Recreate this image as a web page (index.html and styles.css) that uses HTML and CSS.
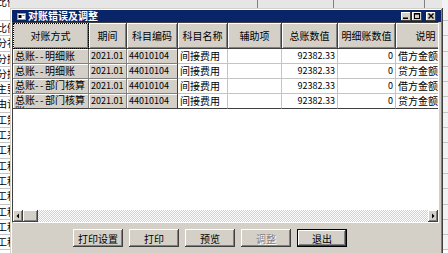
FILE: index.html
```html
<!DOCTYPE html>
<html lang="zh-CN">
<head>
  <meta charset="UTF-8">
  <meta name="viewport" content="width=device-width, initial-scale=1.0">
  <title>对账错误及调整</title>
  <link rel="stylesheet" href="styles.css">
</head>
<body>
<!-- background application sheet -->
<div class="sheet">
  <div class="srow top">
    <span class="sl">比例</span>
    <span class="sm"><i class="seg s1"></i><i class="seg s2"></i><i class="seg s3"></i></span>
    <span class="sr"></span>
  </div>
  <div class="srow gap"><span class="sl"></span><span class="sm"></span><span class="sr"></span></div>
  <div class="srow"><span class="sl">比例</span><span class="sm"></span><span class="sr"></span></div>
  <div class="srow"><span class="sl">分补</span><span class="sm"></span><span class="sr"></span></div>
  <div class="srow"><span class="sl">分摊</span><span class="sm"></span><span class="sr"></span></div>
  <div class="srow"><span class="sl">分摊</span><span class="sm"></span><span class="sr"></span></div>
  <div class="srow"><span class="sl">主要</span><span class="sm"></span><span class="sr"></span></div>
  <div class="srow"><span class="sl">由计</span><span class="sm"></span><span class="sr"></span></div>
  <div class="srow"><span class="sl">工策</span><span class="sm"></span><span class="sr"></span></div>
  <div class="srow"><span class="sl">工采</span><span class="sm"></span><span class="sr"></span></div>
  <div class="srow"><span class="sl">工程</span><span class="sm"></span><span class="sr"></span></div>
  <div class="srow"><span class="sl">工程</span><span class="sm"></span><span class="sr"></span></div>
  <div class="srow"><span class="sl">工程</span><span class="sm"></span><span class="sr"></span></div>
  <div class="srow"><span class="sl">工程</span><span class="sm"></span><span class="sr"></span></div>
  <div class="srow"><span class="sl">工程</span><span class="sm"></span><span class="sr"></span></div>
  <div class="srow"><span class="sl">工程</span><span class="sm"></span><span class="sr"></span></div>
  <div class="srow"><span class="sl">工程</span><span class="sm"></span><span class="sr"></span></div>
</div>

<div class="dialog">
  <div class="titlebar">
    <svg class="appicon" viewBox="0 0 9 7">
      <rect x="0.5" y="0.5" width="8" height="6" fill="#fff" stroke="#9a9a9a"/>
      <rect x="1.5" y="2" width="3" height="3" fill="#000"/>
      <rect x="5.5" y="2" width="2" height="1" fill="#6a8a6a"/>
    </svg>
    <span class="title">对账错误及调整</span>
    <span class="tbtn">
      <svg viewBox="0 0 10 9"><rect x="2" y="5.5" width="5" height="1.5" fill="#000"/></svg>
    </span>
    <span class="tbtn">
      <svg viewBox="0 0 10 9"><rect x="2.5" y="1.5" width="5" height="5" fill="none" stroke="#000"/><rect x="2" y="1" width="6" height="1.6" fill="#000"/></svg>
    </span>
    <span class="tbtn close">
      <svg viewBox="0 0 10 9"><path d="M2.5 1.5 L7.5 6.5 M7.5 1.5 L2.5 6.5" stroke="#000" stroke-width="1.4"/></svg>
    </span>
  </div>

  <div class="grid">
    <div class="grow ghead">
      <div class="hc focus">对账方式</div>
      <div class="hc">期间</div>
      <div class="hc">科目编码</div>
      <div class="hc">科目名称</div>
      <div class="hc">辅助项</div>
      <div class="hc">总账数值</div>
      <div class="hc">明细账数值</div>
      <div class="hc">说明</div>
    </div>
    <div class="grow">
      <div class="fc">总账<span class="dash">--</span>明细账</div>
      <div class="fc num">2021.01</div>
      <div class="fc num">44010104</div>
      <div class="dc">间接费用</div>
      <div class="dc"></div>
      <div class="dc num r">92382.33</div>
      <div class="dc num r">0</div>
      <div class="dc">借方金额不符</div>
    </div>
    <div class="grow">
      <div class="fc">总账<span class="dash">--</span>明细账</div>
      <div class="fc num">2021.01</div>
      <div class="fc num">44010104</div>
      <div class="dc">间接费用</div>
      <div class="dc"></div>
      <div class="dc num r">92382.33</div>
      <div class="dc num r">0</div>
      <div class="dc">贷方金额不符</div>
    </div>
    <div class="grow">
      <div class="fc wrap">总账<span class="dash">--</span>部门核算账</div>
      <div class="fc num">2021.01</div>
      <div class="fc num">44010104</div>
      <div class="dc">间接费用</div>
      <div class="dc"></div>
      <div class="dc num r">92382.33</div>
      <div class="dc num r">0</div>
      <div class="dc">借方金额不符</div>
    </div>
    <div class="grow last">
      <div class="fc wrap">总账<span class="dash">--</span>部门核算账</div>
      <div class="fc num">2021.01</div>
      <div class="fc num">44010104</div>
      <div class="dc">间接费用</div>
      <div class="dc"></div>
      <div class="dc num r">92382.33</div>
      <div class="dc num r">0</div>
      <div class="dc">贷方金额不符</div>
    </div>
    <div class="blank"></div>
    <div class="hscroll">
      <span class="sbtn"><svg viewBox="0 0 10 12"><path d="M6 3.5 L3.5 6 L6 8.5 Z" fill="#000"/></svg></span>
      <span class="thumb"></span>
      <span class="track"></span>
      <span class="sbtn"><svg viewBox="0 0 10 12"><path d="M4 3.5 L6.5 6 L4 8.5 Z" fill="#000"/></svg></span>
    </div>
  </div>

  <div class="actions">
    <button class="btn">打印设置</button>
    <button class="btn">打印</button>
    <button class="btn">预览</button>
    <button class="btn" disabled>调整</button>
    <button class="btn default">退出</button>
  </div>
</div>
</body>
</html>
```

FILE: styles.css
```css
html, body {
  margin: 0;
  height: 100%;
  overflow: hidden;
}
body {
  position: relative;
  font-family: "Noto Sans CJK SC", sans-serif;
  font-size: 10px;
  color: #000;
  background-color: #fff;
}

/* background sheet */
.sheet {
  display: flex;
  flex-direction: column;
}
.srow {
  display: flex;
  flex: none;
  height: 15.3px;
  box-sizing: border-box;
  border-bottom: 1px solid #c4c4c4;
}
.srow .sl {
  width: 10px;
  overflow: hidden;
  white-space: nowrap;
  text-indent: -3px;
  line-height: 14px;
}
.srow .sm {
  flex: 1;
  display: flex;
}
.srow .sr {
  width: 6px;
  background-color: #f2f2f2;
}
.srow.top {
  height: 8px;
  border-bottom: 0;
}
.srow.top .sl {
  line-height: 14px;
  margin-top: -5px;
}
.srow.top .sm {
  background-color: #e6e6e6;
}
.srow.gap {
  height: 13px;
}
.seg {
  border-right: 1px solid #808080;
}
.s1 { width: 247px; }
.s2 { width: 75px; }
.s3 { width: 90px; }

/* dialog window */
.dialog {
  position: absolute;
  left: 10px;
  top: 8px;
  width: 433px;
  height: 252px;
  box-sizing: border-box;
  padding: 2px;
  background-color: #d4d0c8;
  box-shadow: inset -1px -1px #404040, inset 1px 1px #d4d0c8, inset -2px -2px #808080, inset 2px 2px #fff;
}
.titlebar {
  display: flex;
  align-items: center;
  height: 12px;
  padding: 0 5px;
  background-color: #0a246a;
  color: #fff;
  overflow: hidden;
}
.appicon {
  width: 9px;
  height: 7px;
  margin-right: 2px;
}
.title {
  flex: 1;
  font-weight: bold;
  font-size: 10px;
  line-height: 12px;
  margin-top: -1px;
}
.tbtn {
  display: flex;
  width: 10px;
  height: 9px;
  background-color: #d4d0c8;
  box-shadow: inset -1px -1px #404040, inset 1px 1px #fff;
}
.tbtn + .tbtn {
  margin-left: 1px;
}
.tbtn.close {
  margin-left: 4px;
}
.tbtn svg {
  width: 10px;
  height: 9px;
}

/* data grid */
.grid {
  display: flex;
  flex-direction: column;
  height: 201px;
  box-sizing: border-box;
  margin-right: 2px;
  border: 1px solid;
  border-color: #404040 #fff #fff #404040;
  background-color: #fff;
  overflow: hidden;
}
.grow {
  display: grid;
  grid-template-columns: 76px 38px 51px 50px 54px 56px 58px 60px;
  flex: none;
  height: 15px;
}
.grow > div {
  box-sizing: border-box;
  overflow: hidden;
  white-space: nowrap;
  padding: 0 2px;
  line-height: 14px;
}
.ghead {
  height: 26px;
}
.hc {
  display: flex;
  align-items: center;
  justify-content: center;
  background-color: #d4d0c8;
  border-right: 1px solid #404040;
  border-bottom: 1px solid #404040;
  box-shadow: inset 1px 1px #fff, inset -1px -1px #808080;
}
.hc.focus {
  outline: 1px dotted #000;
  outline-offset: -1px;
}
.fc {
  background-color: #d4d0c8;
  border-right: 1px solid #808080;
  border-bottom: 1px solid #808080;
  box-shadow: inset 1px 1px #fff;
}
.fc:nth-child(3) {
  border-right-color: #404040;
}
.fc.wrap {
  white-space: normal;
  word-break: break-all;
  line-height: 11px;
}
.dash {
  letter-spacing: 1.5px;
}
.dc {
  border-right: 1px solid #c4c4c4;
  border-bottom: 1px solid #c4c4c4;
}
.grow.last > div {
  border-bottom-color: #404040;
}
.num {
  font-size: 9px;
}
.r {
  text-align: right;
}
.blank {
  flex: 1;
}
.hscroll {
  display: flex;
  flex: none;
  height: 12px;
}
.sbtn, .thumb {
  display: flex;
  width: 10px;
  background-color: #d4d0c8;
  box-shadow: inset -1px -1px #404040, inset 1px 1px #fff, inset -2px -2px #808080;
}
.sbtn svg {
  width: 10px;
  height: 12px;
}
.thumb {
  width: 15px;
}
.track {
  flex: 1;
  background: repeating-conic-gradient(#d4d0c8 0% 25%, #fff 0% 50%) 0 0 / 2px 2px;
}

/* buttons */
.actions {
  display: flex;
  gap: 6px;
  padding: 6px 0 0 61px;
}
.btn {
  width: 50px;
  height: 18px;
  padding: 0;
  border: 0;
  font-family: "Noto Sans CJK SC", sans-serif;
  font-size: 10px;
  color: #000;
  background-color: #d4d0c8;
  box-shadow: inset -1px -1px #404040, inset 1px 1px #fff, inset -2px -2px #808080;
}
.btn.default {
  box-shadow: inset 0 0 0 1px #000, inset -2px -2px #404040, inset 2px 2px #fff, inset -3px -3px #808080;
}
.btn:disabled {
  color: #808080;
  text-shadow: 1px 1px #fff;
}
```
